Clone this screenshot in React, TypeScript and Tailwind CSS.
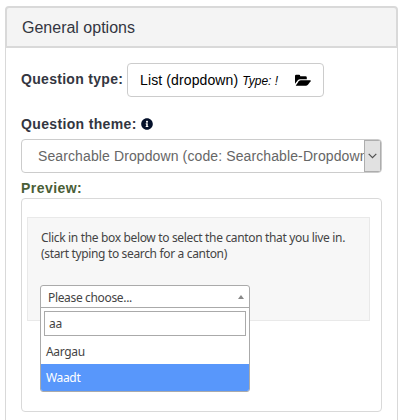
import React from "react";
import { FaInfoCircle } from "react-icons/fa";

function FolderOpenIcon() {
  return (
    <svg className="ml-[17px] h-[13px] w-[16px]" viewBox="0 0 16 13" fill="currentColor">
      <path d="M0 10V2Q0 .7 1.3.7H4Q5.2.7 5.2 2V2.3H10.5Q11.8 2.3 11.8 3.5V5.2H5Q3.7 5.2 2.8 6.2L.2 9.6Z" />
      <path d="M.8 11.5 3.8 7.3Q4.6 6.3 5.8 6.3H15.4Q16 6.5 15.6 7.3L12.9 10.7Q12 11.7 10.8 11.7H1Z" />
    </svg>
  );
}

function QuestionType() {
  return (
    <div className="flex h-[34px] items-center">
      <span className="w-[106px] whitespace-nowrap pb-[2px] text-[14px] font-bold tracking-[0.3px]">Question type:</span>
      <button className="flex h-[34px] w-[197px] items-center whitespace-nowrap rounded-[4px] border border-[#ccc] bg-white pl-3 text-[14px] text-black">
        <span className="tracking-[0.12px]">List (dropdown)</span>
        <em className="ml-1 pt-px text-[12px]">Type: !</em>
        <FolderOpenIcon />
      </button>
    </div>
  );
}

function ThemeSelect() {
  return (
    <div className="mt-[6px] flex h-[34px] overflow-hidden rounded-[4px] border border-[#ccc] bg-white">
      <span className="w-[342px] overflow-hidden whitespace-nowrap pl-4 text-[14px] leading-[33px] tracking-[0.11px] text-[#666]">
        Searchable Dropdown (code: Searchable-Dropdown
      </span>
      <span className="flex w-[17px] shrink-0 items-center justify-center border border-[#adadad] bg-[#e1e1e1]">
        <svg width="9" height="6" viewBox="0 0 9 6" fill="none" stroke="#505050" strokeWidth="1.2">
          <path d="M.7.8 4.5 4.6 8.3.8" />
        </svg>
      </span>
    </div>
  );
}

function CantonDropdown() {
  return (
    <div className="absolute left-[18px] top-[86px] h-[107px] w-[210px] overflow-hidden rounded-[3px] border border-[#aaa] bg-white">
      <div className="flex h-[22px] items-center justify-between border-b border-[#aaa] pl-[7px] pr-[5px] pt-[2px]">
        <span>Please choose...</span>
        <svg className="mb-[2px]" width="6" height="4" viewBox="0 0 6 4" fill="#888">
          <path d="M0 4 3 0 6 4Z" />
        </svg>
      </div>
      <div className="ml-[3px] mt-[3px] flex h-[25px] w-[202px] items-center border border-[#aaa] pl-[4px]">aa</div>
      <div className="flex h-[28px] items-center pl-[5px] pt-[4px]">Aargau</div>
      <div className="flex h-[27px] items-center bg-[#5897fb] pl-[5px] text-white">Waadt</div>
    </div>
  );
}

export default function App() {
  return (
    <main className="h-[420px] w-[403px] overflow-hidden bg-white pl-[5px] pt-[6px] font-['Liberation_Sans',Arial,sans-serif] text-[#333641]">
      <section className="w-[393px]">
        <h1 className="flex h-[42px] items-center rounded-t-[4px] border-2 border-[#d9d9d9] bg-[#f4f4f4] pl-[15px] pt-[2px] text-[16px] text-[#333641]">
          General options
        </h1>
        <div className="h-[372px] border-x border-[#d9d9d9] pl-[15px] pr-[15px] pt-[15px]">
          <QuestionType />
          <div className="mt-[17px] flex h-[20px] items-center whitespace-nowrap text-[14px] font-bold tracking-[0.35px]">
            Question theme:
            <FaInfoCircle className="ml-[4px] h-[12px] w-[12px] text-[#05112b]" />
          </div>
          <div className="-mt-px">
            <ThemeSelect />
          </div>
          <div className="mt-[5px] h-[20px] text-[14px] font-bold leading-[20px] tracking-[0.45px] text-[#4a5e37]">Preview:</div>
          <div className="relative h-[214px] rounded-[4px] border border-[#d9d9d9] pl-[5px] pt-[18px] font-['Noto_Sans','Open_Sans',sans-serif] text-[12px] tracking-[-0.34px] text-[#444]">
            <div className="h-[104px] w-[343px] whitespace-nowrap border border-[#e9e9e9] bg-[#f7f7f7] pl-[13px] pt-[12px] leading-[16px]">
              <p>Click in the box below to select the canton that you live in.</p>
              <p>(start typing to search for a canton)</p>
            </div>
            <CantonDropdown />
          </div>
        </div>
      </section>
    </main>
  );
}
